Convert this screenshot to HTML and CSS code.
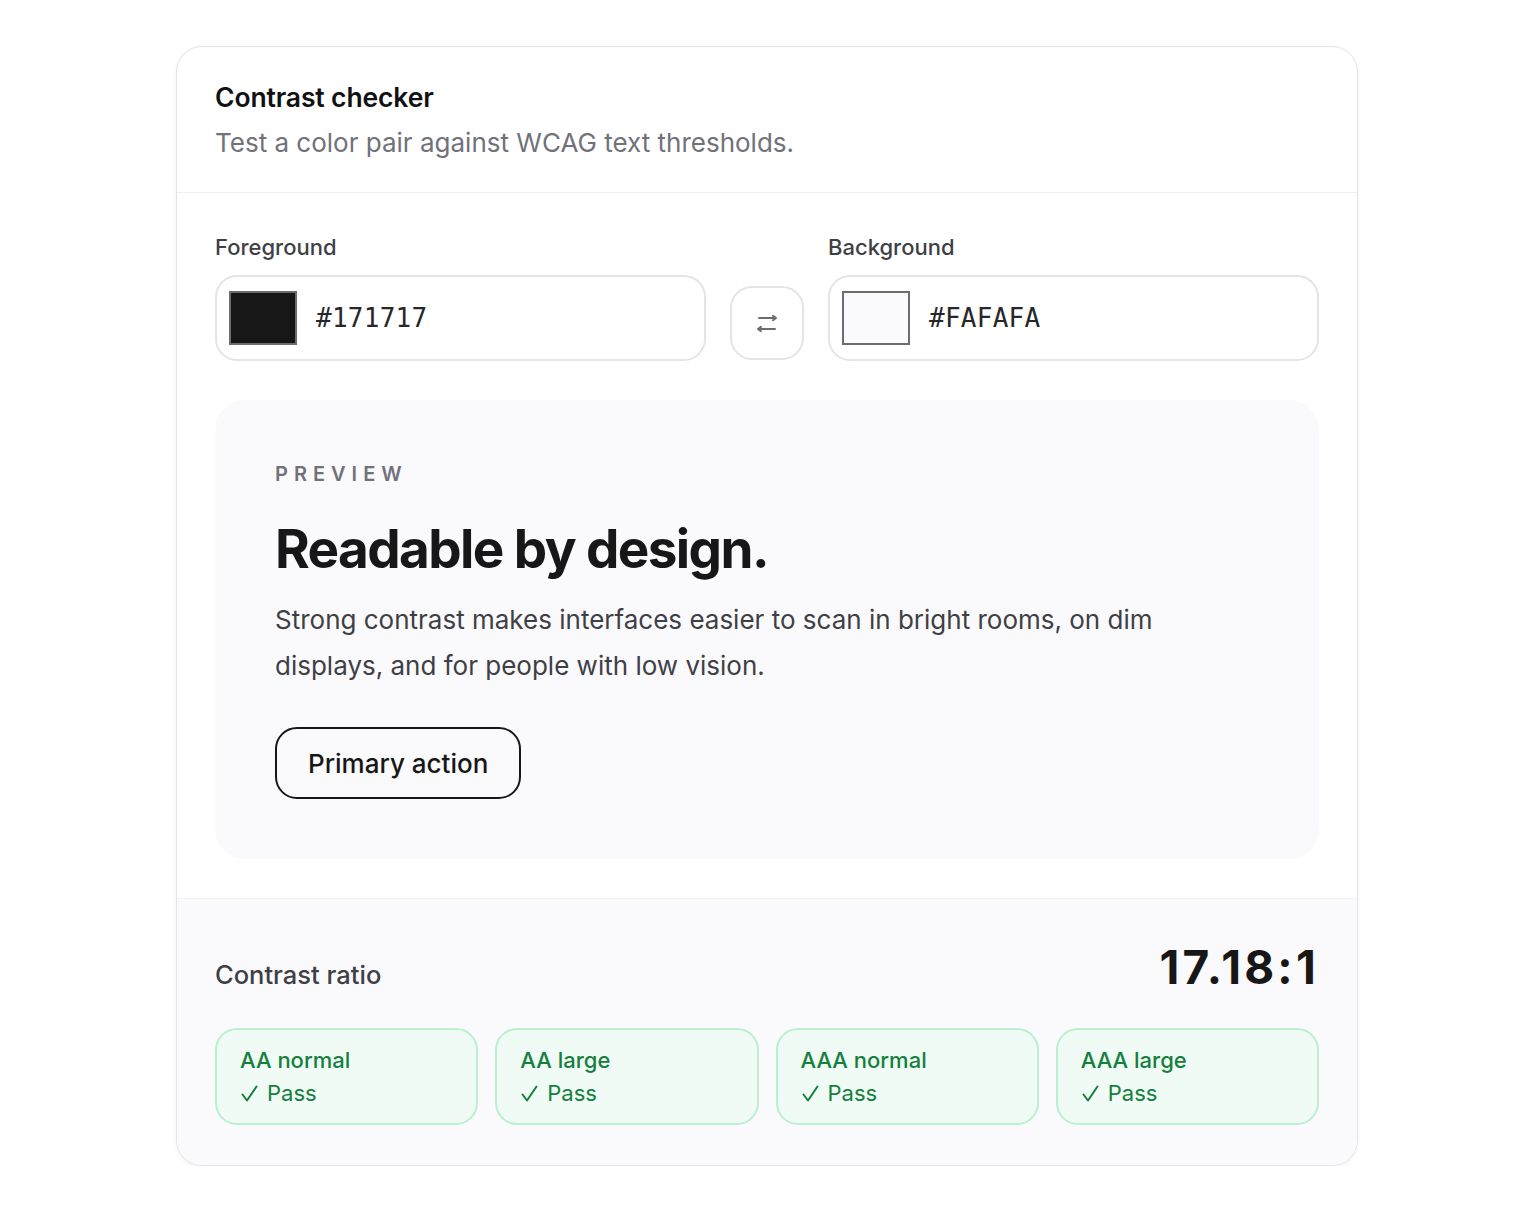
FILE: index.html
```html
<!DOCTYPE html>
<html lang="en">
<head>
<meta charset="utf-8">
<title>Contrast checker</title>
<link rel="stylesheet" href="styles.css">
</head>
<body>
<div class="card">
  <header class="card-head">
    <h1 class="title">Contrast checker</h1>
    <p class="subtitle">Test a color pair against WCAG text thresholds.</p>
  </header>
  <section class="card-body">
    <div class="pickers">
      <div class="field">
        <label class="label">Foreground</label>
        <div class="input">
          <span class="swatch swatch-fg"></span>
          <span class="hex">#171717</span>
        </div>
      </div>
      <button class="swap" aria-label="Swap colors">
        <svg width="22" height="17" viewBox="0 0 22 17" fill="none" stroke="#6b6b70" stroke-width="2" stroke-linecap="round" stroke-linejoin="round">
          <path d="M3 3H20M17 0.8L20 3L17 5.2"/>
          <path d="M19 14H2M5 11.8L2 14L5 16.2"/>
        </svg>
      </button>
      <div class="field">
        <label class="label">Background</label>
        <div class="input">
          <span class="swatch swatch-bg"></span>
          <span class="hex">#FAFAFA</span>
        </div>
      </div>
    </div>
    <div class="preview">
      <div class="eyebrow">PREVIEW</div>
      <h2 class="headline">Readable by design.</h2>
      <p class="copy">Strong contrast makes interfaces easier to scan in bright rooms, on dim displays, and for people with low vision.</p>
      <button class="primary">Primary action</button>
    </div>
  </section>
  <footer class="card-foot">
    <div class="ratio-row">
      <span class="ratio-label">Contrast ratio</span>
      <span class="ratio-value">17.18:1</span>
    </div>
    <div class="tiles">
      <div class="tile"><div class="tile-name">AA normal</div><div class="tile-status"><svg class="check" width="17" height="17" viewBox="0 0 17 17" fill="none" stroke="currentColor" stroke-width="2" stroke-linecap="round" stroke-linejoin="round"><path d="M1.5 9.5L6 15.5L15.5 1.5"/></svg>Pass</div></div>
      <div class="tile"><div class="tile-name">AA large</div><div class="tile-status"><svg class="check" width="17" height="17" viewBox="0 0 17 17" fill="none" stroke="currentColor" stroke-width="2" stroke-linecap="round" stroke-linejoin="round"><path d="M1.5 9.5L6 15.5L15.5 1.5"/></svg>Pass</div></div>
      <div class="tile"><div class="tile-name">AAA normal</div><div class="tile-status"><svg class="check" width="17" height="17" viewBox="0 0 17 17" fill="none" stroke="currentColor" stroke-width="2" stroke-linecap="round" stroke-linejoin="round"><path d="M1.5 9.5L6 15.5L15.5 1.5"/></svg>Pass</div></div>
      <div class="tile"><div class="tile-name">AAA large</div><div class="tile-status"><svg class="check" width="17" height="17" viewBox="0 0 17 17" fill="none" stroke="currentColor" stroke-width="2" stroke-linecap="round" stroke-linejoin="round"><path d="M1.5 9.5L6 15.5L15.5 1.5"/></svg>Pass</div></div>
    </div>
  </footer>
</div>
</body>
</html>
```
FILE: styles.css
```css
* { box-sizing: border-box; }
html, body { margin: 0; padding: 0; background: #ffffff; }
body {
  font-family: Inter, "Noto Sans", "Liberation Sans", sans-serif;
  color: #171717;
  padding-top: 46px;
}
.card {
  width: 1182px;
  margin: 0 auto;
  border: 1px solid #e4e4e7;
  border-radius: 26px;
  background: #ffffff;
  overflow: hidden;
  box-shadow: 0 2px 4px rgba(0,0,0,0.05);
}
.card-head {
  padding: 34px 38px 31px;
  border-bottom: 1px solid #f0f0f2;
}
.title {
  margin: 0;
  font-size: 26.5px;
  line-height: 32px;
  font-weight: 600;
  letter-spacing: -0.005em;
  color: #111113;
}
.subtitle {
  margin: 12px 0 0;
  font-size: 26px;
  line-height: 36px;
  color: #71717a;
}
.card-body {
  padding: 39px 38px 39px;
}
.pickers {
  display: grid;
  grid-template-columns: 1fr 74px 1fr;
  column-gap: 24px;
  align-items: end;
}
.field { display: flex; flex-direction: column; }
.label {
  font-size: 22px;
  line-height: 30px;
  font-weight: 500;
  color: #3f3f46;
  margin-bottom: 13px;
}
.input {
  height: 86px;
  border: 2px solid #e4e4e7;
  border-radius: 22px;
  background: #ffffff;
  display: flex;
  align-items: center;
  padding: 0 12px;
  gap: 19px;
}
.swatch {
  width: 68px;
  height: 54px;
  border: 2px solid #6b6b70;
  flex: none;
}
.swatch-fg { background: #171717; }
.swatch-bg { background: #faf9fc; }
.hex {
  font-family: "DejaVu Sans Mono", "Liberation Mono", monospace;
  font-size: 26px;
  color: #27272a;
  letter-spacing: 0.01em;
}
.swap {
  width: 74px;
  height: 74px;
  margin-bottom: 1px;
  border: 2px solid #e4e4e7;
  border-radius: 22px;
  background: #ffffff;
  display: flex;
  align-items: center;
  justify-content: center;
  padding: 0;
}
.preview {
  margin-top: 39px;
  background: #faf9fc;
  border-radius: 30px;
  padding: 60px 60px 60px;
}
.eyebrow {
  font-size: 20px;
  line-height: 28px;
  font-weight: 600;
  letter-spacing: 0.3em;
  color: #71717a;
}
.headline {
  margin: 30px 0 0;
  font-size: 53px;
  line-height: 62px;
  font-weight: 700;
  letter-spacing: -0.03em;
  color: #171717;
}
.copy {
  margin: 17px 0 0;
  max-width: 920px;
  font-size: 26px;
  line-height: 46px;
  color: #3f3f46;
}
.primary {
  margin-top: 38px;
  height: 72px;
  padding: 0 31px;
  border: 2px solid #171717;
  border-radius: 22px;
  background: transparent;
  font-family: Inter, "Noto Sans", sans-serif;
  font-size: 26px;
  font-weight: 500;
  color: #171717;
}
.card-foot {
  background: #faf9fc;
  border-top: 1px solid #f2f2f4;
  padding: 38px 38px 40px;
}
.ratio-row {
  display: flex;
  justify-content: space-between;
  align-items: baseline;
}
.ratio-label {
  font-size: 25.5px;
  font-weight: 500;
  color: #3f3f46;
}
.ratio-value {
  font-size: 46px;
  line-height: 60px;
  font-weight: 700;
  letter-spacing: 0.07em;
  color: #171717;
}
.tiles {
  margin-top: 31px;
  display: grid;
  grid-template-columns: repeat(4, 1fr);
  column-gap: 17px;
}
.tile {
  height: 97px;
  border: 2px solid #b9f0cf;
  border-radius: 22px;
  background: #f0fbf5;
  padding: 14px 23px;
  color: #15803d;
  font-size: 22px;
  line-height: 33px;
  font-weight: 500;
}
.tile-status {
  font-weight: 400;
  display: flex;
  align-items: center;
}
.check {
  flex: none;
  margin: 0 9px 0 1px;
}
```
